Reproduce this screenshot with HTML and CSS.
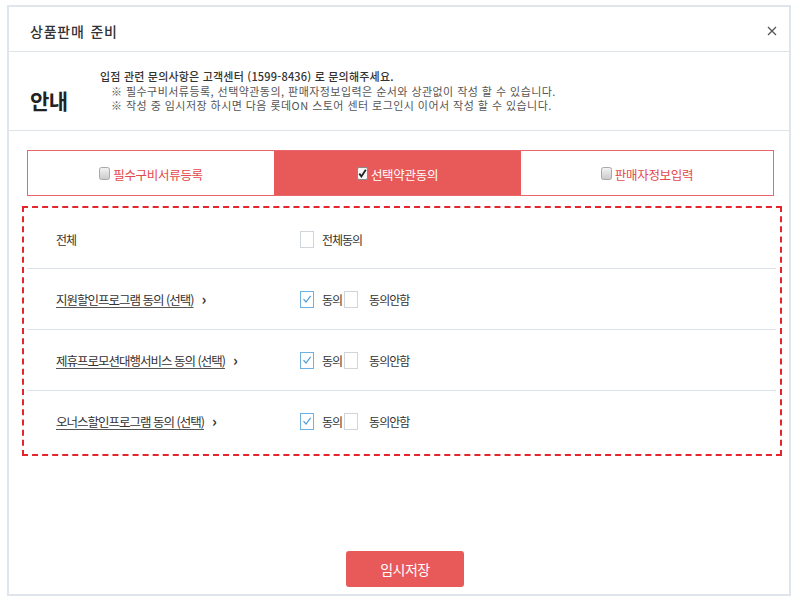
FILE: index.html
```html
<!DOCTYPE html>
<html lang="ko">
<head>
<meta charset="utf-8">
<title>상품판매 준비</title>
<link rel="stylesheet" href="styles.css">
</head>
<body>
<div class="modal">
  <div class="modal-header">
    <h1 class="modal-title">상품판매 준비</h1>
    <span class="close" aria-label="닫기">
      <svg width="10" height="10" viewBox="0 0 10 10"><path d="M1 1L9 9M9 1L1 9" stroke="#555" stroke-width="1.3" fill="none"/></svg>
    </span>
  </div>
  <div class="info">
    <div class="info-title">안내</div>
    <div class="info-text">
      <p class="info-main">입점 관련 문의사항은 고객센터 (1599-8436) 로 문의해주세요.</p>
      <p class="info-note">※ 필수구비서류등록, 선택약관동의, 판매자정보입력은 순서와 상관없이 작성 할 수 있습니다.</p>
      <p class="info-note">※ 작성 중 임시저장 하시면 다음 롯데ON 스토어 센터 로그인시 이어서 작성 할 수 있습니다.</p>
    </div>
  </div>
  <div class="tabs">
    <div class="tab">
      <svg class="tab-box" width="11" height="13" viewBox="0 0 11 13"><defs><linearGradient id="g1" x1="0" y1="0" x2="0" y2="1"><stop offset="0" stop-color="#f4f4f4"/><stop offset="1" stop-color="#c9c9c9"/></linearGradient></defs><rect x="0.5" y="0.5" width="10" height="12" rx="2" fill="url(#g1)" stroke="#a9a9a9"/></svg>
      <span>필수구비서류등록</span>
    </div>
    <div class="tab active">
      <svg class="tab-box" width="11" height="13" viewBox="0 0 11 13"><rect x="0.5" y="0.5" width="10" height="12" rx="1.5" fill="#f6f6f6" stroke="#8a8a8a"/><path d="M2.3 6.6L4.4 9.4L8.8 2.8" stroke="#222" stroke-width="1.8" fill="none"/></svg>
      <span>선택약관동의</span>
    </div>
    <div class="tab">
      <svg class="tab-box" width="11" height="13" viewBox="0 0 11 13"><defs><linearGradient id="g2" x1="0" y1="0" x2="0" y2="1"><stop offset="0" stop-color="#f4f4f4"/><stop offset="1" stop-color="#c9c9c9"/></linearGradient></defs><rect x="0.5" y="0.5" width="10" height="12" rx="2" fill="url(#g2)" stroke="#a9a9a9"/></svg>
      <span>판매자정보입력</span>
    </div>
  </div>
  <div class="highlight">
    <div class="terms">
      <div class="row first">
        <span class="label plain">전체</span>
        <div class="opts">
          <span class="cb"></span><span class="opt-text">전체동의</span>
        </div>
      </div>
      <div class="row">
        <span class="label"><u>지원할인프로그램 동의 (선택)</u><span class="arrow">›</span></span>
        <div class="opts">
          <span class="cb on"><svg width="12" height="14" viewBox="0 0 12 14"><path d="M2.5 7.2L5 10L9.6 3.8" stroke="#4d9fd9" stroke-width="1.2" fill="none"/></svg></span><span class="opt-text">동의</span>
          <span class="cb no"></span><span class="opt-text">동의안함</span>
        </div>
      </div>
      <div class="row">
        <span class="label"><u>제휴프로모션대행서비스 동의 (선택)</u><span class="arrow">›</span></span>
        <div class="opts">
          <span class="cb on"><svg width="12" height="14" viewBox="0 0 12 14"><path d="M2.5 7.2L5 10L9.6 3.8" stroke="#4d9fd9" stroke-width="1.2" fill="none"/></svg></span><span class="opt-text">동의</span>
          <span class="cb no"></span><span class="opt-text">동의안함</span>
        </div>
      </div>
      <div class="row">
        <span class="label"><u>오너스할인프로그램 동의 (선택)</u><span class="arrow">›</span></span>
        <div class="opts">
          <span class="cb on"><svg width="12" height="14" viewBox="0 0 12 14"><path d="M2.5 7.2L5 10L9.6 3.8" stroke="#4d9fd9" stroke-width="1.2" fill="none"/></svg></span><span class="opt-text">동의</span>
          <span class="cb no"></span><span class="opt-text">동의안함</span>
        </div>
      </div>
    </div>
  </div>
  <div class="footer">
    <button class="save" type="button">임시저장</button>
  </div>
</div>
</body>
</html>
```
FILE: styles.css
```css
* { box-sizing: border-box; }
html, body { margin: 0; padding: 0; background: #ffffff; }
body {
  font-family: "Noto Sans CJK KR", "Noto Sans", sans-serif;
  color: #333;
  width: 800px;
  height: 604px;
  overflow: hidden;
}
.modal {
  margin: 5px 9px 8px 7px;
  height: 591px;
  border: 2px solid #dfe5ea;
  display: flex;
  flex-direction: column;
  background: #fff;
}
.modal-header {
  height: 45px;
  border-bottom: 1px solid #dfe4e8;
  display: flex;
  align-items: center;
  justify-content: space-between;
  padding: 3px 12px 0 21px;
}
.modal-title {
  margin: 0;
  font-size: 14px;
  font-weight: 500;
  color: #333;
  letter-spacing: 0.8px;
  word-spacing: 1px;
}
.close { display: flex; width: 10px; height: 10px; }
.info {
  height: 79px;
  border-bottom: 1px solid #dfe4e8;
  display: flex;
  padding: 17px 0 0 21px;
}
.info-title {
  font-size: 21px;
  font-weight: 700;
  color: #222;
  width: 70px;
  padding-top: 17px;
  line-height: 28px;
  letter-spacing: -0.5px;
}
.info-text p { margin: 0; font-size: 11px; line-height: 14.5px; }
.info-main { font-weight: 500; color: #333; letter-spacing: 0.2px; }
.info-note { padding-left: 11px; color: #555; letter-spacing: 0.45px; }
.tabs {
  margin: 19px 15px 0 18px;
  height: 46px;
  display: grid;
  grid-template-columns: 246px 247px 1fr;
  border: 1px solid #e9676a;
}
.tab {
  display: flex;
  align-items: center;
  justify-content: center;
  gap: 3px;
  font-size: 12.5px;
  letter-spacing: -0.3px;
  color: #e4484c;
  padding-top: 2px;
}
.tab.active { background: #e85a5a; color: #fff; }
.tab-box { display: block; margin-top: -1px; }
.highlight {
  margin: 10px 7px 0 13px;
  border: 2px dashed #e3262b;
  padding: 3px 4px 3px 3px;
}
.terms { display: flex; flex-direction: column; }
.row {
  display: grid;
  grid-template-columns: 244px 1fr;
  align-items: center;
  height: 61px;
  border-top: 1px solid #dde3e8;
  padding-left: 29px;
}
.row.first { height: 57px; border-top: none; }
.label {
  font-size: 12.5px;
  letter-spacing: -1px;
  color: #333;
  display: flex;
  align-items: center;
}
.label.plain { font-size: 12px; }
.label u { text-decoration-color: #555; text-underline-offset: 2px; }
.arrow { font-size: 15px; font-weight: 700; margin-left: 8px; color: #333; line-height: 1; margin-top: -2px; }
.opts { display: flex; align-items: center; }
.cb {
  width: 14px;
  height: 17px;
  border: 1px solid #cfd5da;
  background: #fff;
  display: inline-flex;
  align-items: center;
  justify-content: center;
}
.cb.on { border-color: #6db0e2; }
.cb.no { margin-left: 2px; }
.opt-text {
  font-size: 12px;
  letter-spacing: -1px;
  color: #333;
  margin-left: 8px;
}
.opts .cb.no + .opt-text { margin-left: 11px; }
.footer {
  margin-top: auto;
  display: flex;
  justify-content: center;
  padding: 0 0 7px 12px;
}
.save {
  width: 118px;
  height: 36px;
  border: none;
  border-radius: 3px;
  background: #e85a5a;
  color: #fff;
  font-family: "Noto Sans CJK KR", "Noto Sans", sans-serif;
  font-size: 14px;
  letter-spacing: -0.5px;
  padding: 0;
}
```
